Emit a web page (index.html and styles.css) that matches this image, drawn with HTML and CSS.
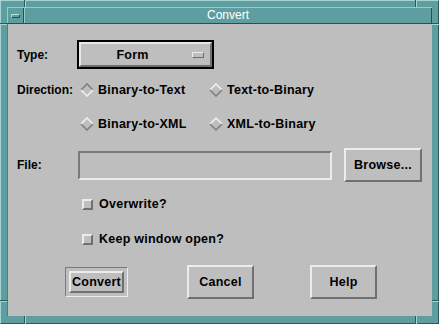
FILE: index.html
```html
<!DOCTYPE html>
<html>
<head>
<meta charset="utf-8">
<link rel="stylesheet" href="styles.css">
</head>
<body>
<div class="win">
  <div class="titlebar">
    <div class="menubtn"><span class="menuicon"></span></div>
    <div class="title">Convert</div>
  </div>
  <div class="client">
    <div class="row type-row">
      <div class="label">Type:</div>
      <div class="optmenu"><div class="optmenu-in"><span class="optval">Form</span><span class="optind"></span></div></div>
    </div>
    <div class="row radio-row first">
      <div class="label">Direction:</div>
      <div class="opt"><svg class="dia" width="14" height="14" viewBox="0 0 14 14"><polygon points="7,1 13,7 7,13 1,7" fill="#bebebe"/><path d="M1,7 L7,1 L13,7" class="dk"/><path d="M1,7 L7,13 L13,7" class="lt"/></svg><span>Binary-to-Text</span></div>
      <div class="opt"><svg class="dia" width="14" height="14" viewBox="0 0 14 14"><polygon points="7,1 13,7 7,13 1,7" fill="#bebebe"/><path d="M1,7 L7,1 L13,7" class="lt"/><path d="M1,7 L7,13 L13,7" class="dk"/></svg><span>Text-to-Binary</span></div>
    </div>
    <div class="row radio-row second">
      <div class="label"></div>
      <div class="opt"><svg class="dia" width="14" height="14" viewBox="0 0 14 14"><polygon points="7,1 13,7 7,13 1,7" fill="#bebebe"/><path d="M1,7 L7,1 L13,7" class="lt"/><path d="M1,7 L7,13 L13,7" class="dk"/></svg><span>Binary-to-XML</span></div>
      <div class="opt"><svg class="dia" width="14" height="14" viewBox="0 0 14 14"><polygon points="7,1 13,7 7,13 1,7" fill="#bebebe"/><path d="M1,7 L7,1 L13,7" class="lt"/><path d="M1,7 L7,13 L13,7" class="dk"/></svg><span>XML-to-Binary</span></div>
    </div>
    <div class="row file-row">
      <div class="label file-label">File:</div>
      <div class="field"></div>
      <div class="btn browse">Browse...</div>
    </div>
    <div class="row check-row c1">
      <span class="cbox"></span><span>Overwrite?</span>
    </div>
    <div class="row check-row c2">
      <span class="cbox"></span><span>Keep window open?</span>
    </div>
    <div class="row btn-row">
      <div class="defring"><div class="btn inner">Convert</div></div>
      <div class="btn action cancel">Cancel</div>
      <div class="btn action help">Help</div>
    </div>
  </div>
  <span class="mark v tl"></span>
  <span class="mark v tr"></span>
  <span class="mark v bl"></span>
  <span class="mark v br"></span>
  <span class="mark h lt1"></span>
  <span class="mark h rt1"></span>
  <span class="mark h lb1"></span>
  <span class="mark h rb1"></span>
</div>
</body>
</html>
```

FILE: styles.css
```css
html, body {
  margin: 0;
  padding: 0;
  background: #5f9ea0;
}
.win {
  position: relative;
  width: 439px;
  height: 324px;
  box-sizing: border-box;
  background: #5f9ea0;
  border: 1px solid;
  border-color: #a6d4d0 #2c5a58 #2c5a58 #a6d4d0;
  padding: 6px 6px 7px 6px;
  display: flex;
  flex-direction: column;
  font-family: "Liberation Sans", Arial, sans-serif;
  font-size: 12.5px;
  letter-spacing: 0.25px;
  font-weight: bold;
  color: #000;
}
.titlebar {
  height: 17px;
  box-sizing: border-box;
  display: flex;
  border-top: 1px solid #98ccc8;
  border-bottom: 1px solid #2c4e4d;
}
.menubtn {
  width: 17px;
  box-sizing: border-box;
  border-left: 1px solid #98ccc8;
  border-right: 1px solid #2c4e4d;
  display: flex;
  align-items: center;
  justify-content: center;
}
.menuicon {
  width: 9px;
  height: 4px;
  box-sizing: border-box;
  border: 1px solid;
  border-color: #b8e0dc #2c4e4d #2c4e4d #b8e0dc;
}
.title {
  flex: 1;
  text-align: center;
  color: #ffffff;
  font-weight: normal;
  font-size: 12px;
  letter-spacing: 0;
  line-height: 15px;
  border-left: 1px solid #98ccc8;
  border-right: 1px solid #2c4e4d;
}
.client {
  flex: 1;
  background: #bebebe;
  box-shadow: inset 1px 0 0 #4a7e7c;
  padding-left: 10px;
  display: flex;
  flex-direction: column;
}
.row {
  display: flex;
  align-items: center;
}
.label {
  width: 60px;
  flex: none;
  font-size: 12px;
  letter-spacing: 0;
}
.type-row {
  margin-top: 16px;
  height: 29px;
}
.optmenu {
  width: 137px;
  height: 29px;
  box-sizing: border-box;
  border: 2px solid #000;
}
.optmenu-in {
  height: 100%;
  box-sizing: border-box;
  border: 2px solid;
  border-color: #e8e8e8 #6e6e6e #6e6e6e #e8e8e8;
  display: flex;
  align-items: center;
  position: relative;
}
.optval {
  flex: 1;
  text-align: center;
  padding-right: 16px;
  padding-left: 8px;
}
.optind {
  width: 12px;
  height: 6px;
  box-sizing: border-box;
  border: 1px solid;
  border-color: #eeeeee #6e6e6e #6e6e6e #eeeeee;
  margin-right: 6px;
  flex: none;
}
.radio-row {
  height: 18px;
}
.radio-row.first { margin-top: 12px; }
.radio-row.second { margin-top: 16px; }
.opt {
  display: flex;
  align-items: center;
  gap: 4px;
  width: 129px;
  flex: none;
}
.radio-row .label + .opt { margin-left: 3px; }
.dia { flex: none; }
.dia path { fill: none; stroke-width: 1.6; }
.dia .lt { stroke: #f0f0f0; }
.dia .dk { stroke: #808080; }
.file-row {
  margin-top: 15px;
  height: 34px;
}
.file-label { width: 61px; }
.field {
  width: 254px;
  height: 29px;
  box-sizing: border-box;
  border: 2px solid;
  border-color: #7a7a7a #ececec #ececec #7a7a7a;
}
.btn {
  box-sizing: border-box;
  border: 2px solid;
  border-color: #ececec #707070 #707070 #ececec;
  display: flex;
  align-items: center;
  justify-content: center;
}
.browse {
  margin-left: 12px;
  width: 78px;
  height: 34px;
}
.check-row {
  height: 18px;
  padding-left: 65px;
  gap: 6px;
}
.check-row.c1 { margin-top: 13px; }
.check-row.c2 { margin-top: 17px; }
.cbox {
  width: 11px;
  height: 11px;
  box-sizing: border-box;
  border: 2px solid;
  border-color: #ececec #707070 #707070 #ececec;
  flex: none;
}
.btn-row {
  margin-top: 17px;
  height: 34px;
}
.defring {
  margin-left: 48px;
  width: 63px;
  height: 30px;
  box-sizing: border-box;
  border: 1px solid;
  border-color: #7a7a7a #ececec #ececec #7a7a7a;
  padding: 3px;
}
.inner {
  width: 55px;
  height: 22px;
}
.action {
  width: 67px;
  height: 34px;
}
.cancel { margin-left: 59px; }
.help { margin-left: 56px; }
.mark {
  position: absolute;
  box-sizing: border-box;
}
.mark.v {
  width: 2px;
  height: 7px;
  border-left: 1px solid #2c5a58;
  border-right: 1px solid #a6d4d0;
}
.mark.h {
  height: 2px;
  width: 7px;
  border-top: 1px solid #2c5a58;
  border-bottom: 1px solid #a6d4d0;
}
.mark.tl { left: 23px; top: -1px; }
.mark.tr { left: 414px; top: -1px; }
.mark.bl { left: 23px; top: 315px; height: 8px; }
.mark.br { left: 414px; top: 315px; height: 8px; }
.mark.lt1 { left: -1px; top: 22px; }
.mark.rt1 { left: 431px; top: 22px; }
.mark.lb1 { left: -1px; top: 299px; }
.mark.rb1 { left: 431px; top: 299px; }
```
